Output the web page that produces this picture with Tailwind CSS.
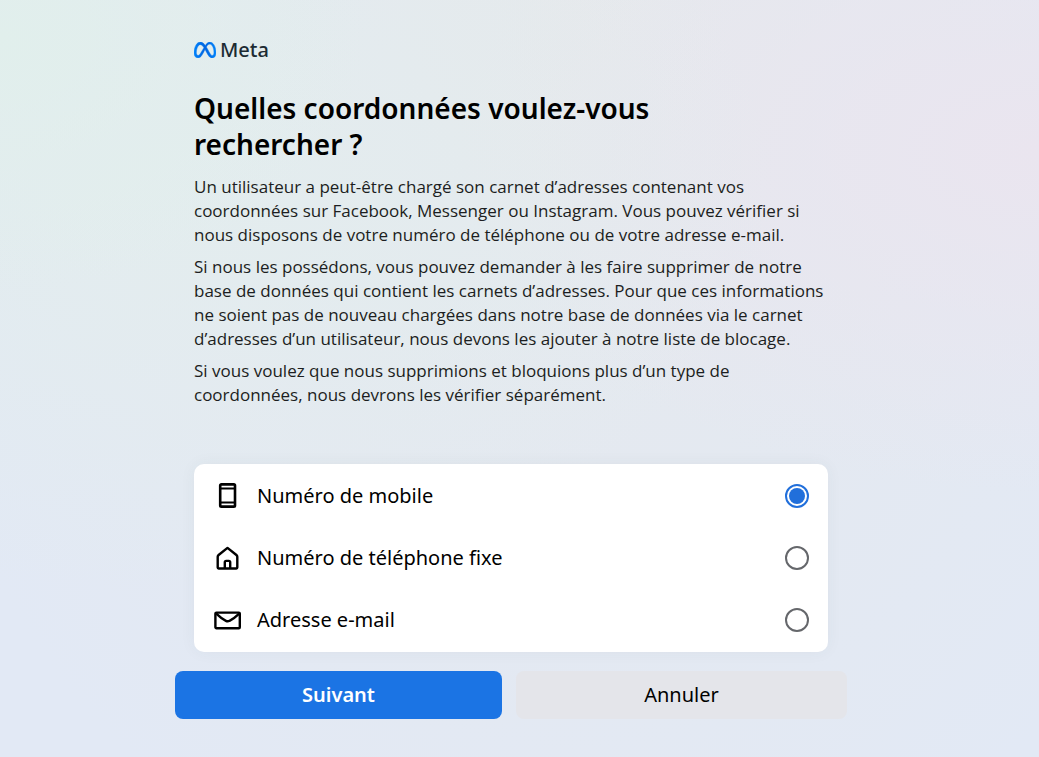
<!DOCTYPE html>
<html lang="fr">
  <head>
    <meta charset="UTF-8" />
    <meta name="viewport" content="width=device-width, initial-scale=1.0" />
    <title>Meta</title>
    <script src="https://cdn.jsdelivr.net/npm/@tailwindcss/browser@4"></script>
  </head>
  <body
    class="min-h-screen bg-[#e2e9f5] bg-[radial-gradient(ellipse_at_0%_5%,#e1efec_0%,#e1efec00_25%),radial-gradient(ellipse_at_15%_25%,#e3edee_0%,#e3edee00_50%),radial-gradient(ellipse_at_100%_20%,#eae5ef_0%,#eae5ef00_40%),radial-gradient(ellipse_at_55%_0%,#e6e9ec_0%,#e6e9ec00_90%)] pr-[17px] font-['Noto_Sans',sans-serif] text-black"
  >
    <main class="mx-auto max-w-2xl pt-9 pb-9">
      <div class="px-[19px]">
        <a href="#" class="flex h-7 w-fit items-center gap-1" aria-label="Meta">
          <svg class="h-4 w-[22px]" viewBox="0 4 24 16" preserveAspectRatio="none">
            <defs>
              <linearGradient id="metaBlue" x1="0" y1="0" x2="1" y2="0">
                <stop offset="0" stop-color="#0082fb" />
                <stop offset="0.5" stop-color="#0064e0" />
                <stop offset="1" stop-color="#0082fb" />
              </linearGradient>
            </defs>
            <path
              fill="url(#metaBlue)"
              stroke="url(#metaBlue)"
              stroke-width="0.4"
              d="M6.915 4.03c-1.968 0-3.683 1.28-4.871 3.113C.704 9.208 0 11.883 0 14.449c0 .706.07 1.369.21 1.973a6.624 6.624 0 0 0 .265.86 5.297 5.297 0 0 0 .371.761c.696 1.159 1.818 1.927 3.593 1.927 1.497 0 2.633-.671 3.965-2.444.76-1.012 1.144-1.626 2.663-4.32l.756-1.339.186-.325c.061.1.121.196.183.3l2.152 3.595c.724 1.21 1.665 2.556 2.47 3.314 1.046.987 1.992 1.22 3.06 1.22 1.075 0 1.876-.355 2.455-.843a3.743 3.743 0 0 0 .81-.973c.542-.939.861-2.127.861-3.745 0-2.72-.681-5.357-2.084-7.45-1.282-1.912-2.957-2.93-4.716-2.93-1.047 0-2.088.467-3.053 1.308-.652.57-1.257 1.29-1.82 2.05-.69-.875-1.335-1.547-1.958-2.056-1.182-.966-2.315-1.303-3.454-1.303zm10.16 2.053c1.147 0 2.188.758 2.992 1.999 1.132 1.748 1.647 4.195 1.647 6.4 0 1.548-.368 2.9-1.839 2.9-.58 0-1.027-.23-1.664-1.004-.496-.601-1.343-1.878-2.832-4.358l-.617-1.028a44.908 44.908 0 0 0-1.255-1.98c.07-.109.141-.224.211-.327 1.12-1.667 2.118-2.602 3.358-2.602zm-10.201.553c1.265 0 2.058.791 2.675 1.446.307.327.737.871 1.234 1.579l-1.02 1.566c-.757 1.163-1.882 3.017-2.837 4.338-1.191 1.649-1.81 1.817-2.486 1.817-.524 0-1.038-.237-1.383-.794-.263-.426-.464-1.13-.464-2.046 0-2.221.63-4.535 1.66-6.088.454-.687.964-1.226 1.533-1.533a2.264 2.264 0 0 1 1.088-.285z"
            />
          </svg>
          <span class="text-[20px] leading-7 font-medium text-[#1c2b33]">Meta</span>
        </a>

        <h1 class="mt-[26px] text-[28px] leading-9 font-semibold">
          Quelles coordonnées voulez-vous<br />
          rechercher&nbsp;?
        </h1>

        <div
          class="mt-[13px] space-y-2 font-['Open_Sans',sans-serif] text-[17px] leading-6 text-[#1c1e21]"
        >
          <p>
            Un utilisateur a peut-être chargé son carnet d’adresses contenant vos<br />
            coordonnées sur Facebook, Messenger ou Instagram. Vous pouvez vérifier si<br />
            nous disposons de votre numéro de téléphone ou de votre adresse e-mail.
          </p>
          <p>
            Si nous les possédons, vous pouvez demander à les faire supprimer de notre<br />
            base de données qui contient les carnets d’adresses. Pour que ces informations<br />
            ne soient pas de nouveau chargées dans notre base de données via le carnet<br />
            d’adresses d’un utilisateur, nous devons les ajouter à notre liste de blocage.
          </p>
          <p>
            Si vous voulez que nous supprimions et bloquions plus d’un type de<br />
            coordonnées, nous devrons les vérifier séparément.
          </p>
        </div>
      </div>

      <form>
        <div
          class="mx-[19px] mt-[57px] rounded-[10px] bg-white py-px text-[20px] leading-7 shadow-[0_0_16px_rgba(52,72,84,0.05)]"
        >
          <label for="mobile" class="flex items-center gap-[15px] py-[17px] pr-[19px] pl-5">
            <svg class="size-7" viewBox="0 0 28 28" fill="none" stroke="currentColor" stroke-width="2.6">
              <rect x="6.2" y="2.4" width="14.8" height="22.2" rx="1.2" />
              <path d="M6 6.5h15M6 20.5h15" stroke-width="2" />
            </svg>
            <span class="flex-1">Numéro de mobile</span>
            <input
              type="radio"
              id="mobile"
              name="contact"
              checked
              class="size-6 appearance-none rounded-full border-2 border-[#65676b] bg-clip-content p-[2px] checked:border-[#216fdb] checked:bg-[#216fdb]"
            />
          </label>
          <label for="fixe" class="flex items-center gap-[15px] py-[17px] pr-[19px] pl-5">
            <svg class="size-7" viewBox="0 0 28 28" fill="none" stroke="currentColor" stroke-width="2.4" stroke-linejoin="round">
              <path d="M13.5 3.9 4.6 11c-.6.5-.9 1-.9 1.8v10.8c0 .6.3.9.9.9h17.8c.6 0 .9-.3.9-.9V12.8c0-.8-.3-1.3-.9-1.8z" />
              <path d="M10.8 24.5v-6.2c0-.9.5-1.4 1.4-1.4h2.6c.9 0 1.4.5 1.4 1.4v6.2" />
            </svg>
            <span class="flex-1">Numéro de téléphone fixe</span>
            <input
              type="radio"
              id="fixe"
              name="contact"
              class="size-6 appearance-none rounded-full border-2 border-[#65676b] bg-clip-content p-[2px] checked:border-[#216fdb] checked:bg-[#216fdb]"
            />
          </label>
          <label for="email" class="flex items-center gap-[15px] py-[17px] pr-[19px] pl-5">
            <svg class="size-7" viewBox="0 0 28 28" fill="none" stroke="currentColor" stroke-width="2.4">
              <rect x="1.4" y="6.6" width="24.4" height="15.6" rx="1" />
              <path d="M2 7.4c3.5 3.4 7 6 9.9 7.4 1.2.6 2.4.6 3.6 0 3-1.400 6.500-4 10-7.400" />
            </svg>
            <span class="flex-1">Adresse e-mail</span>
            <input
              type="radio"
              id="email"
              name="contact"
              class="size-6 appearance-none rounded-full border-2 border-[#65676b] bg-clip-content p-[2px] checked:border-[#216fdb] checked:bg-[#216fdb]"
            />
          </label>
        </div>

        <div class="mt-[19px] grid grid-cols-[327fr_331fr] gap-[14px] text-[20px] leading-7">
          <button
            type="submit"
            class="rounded-lg bg-[#1b74e4] py-[10px] font-semibold text-white hover:bg-[#1a6ed8]"
          >
            Suivant
          </button>
          <button type="button" class="rounded-lg bg-[#e4e5ea] py-[10px] hover:bg-[#d8dadf]">
            Annuler
          </button>
        </div>
      </form>
    </main>
  </body>
</html>
